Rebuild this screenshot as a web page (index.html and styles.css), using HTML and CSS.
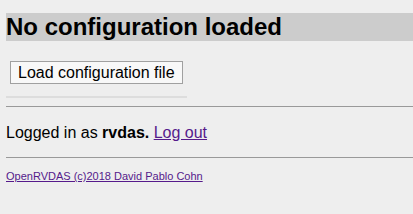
FILE: index.html
```html
<!DOCTYPE html>
<html lang="en">
<head>
    <meta charset="UTF-8" />
    <title>OpenRVDAS</title>
    <link rel="stylesheet" href="styles.css">
</head>
<body>
    <h1 class="status">No configuration loaded</h1>

    <div class="load-panel">
        <button class="load-button">Load configuration file</button>
    </div>

    <hr />

    <div class="login">
        Logged in as <b>rvdas.</b> <a href="#">Log out</a>
    </div>

    <hr />

    <div class="footer">
        <a href="#">OpenRVDAS (c)2018 David Pablo Cohn</a>
    </div>
</body>
</html>
```

FILE: styles.css
```css
body {
    font-family: "Liberation Sans", Arial, sans-serif;
    background: #eeeeee;
    color: #000;
    margin: 0 0 0 6px;
}

a {
    color: #551a8b;
}

h1.status {
    font-size: 24px;
    font-weight: bold;
    background: #cccccc;
    margin: 13px 0 0 0;
    line-height: 28px;
}

.load-panel {
    width: 181px;
    padding: 20px 0 12px 4px;
    box-sizing: border-box;
    border-bottom: 2px solid #dddddd;
}

.load-button {
    font-family: "Liberation Sans", Arial, sans-serif;
    font-size: 16px;
    height: 23px;
    padding: 0 7px;
    background: #f8f8f8;
    border: 1px solid #a0a0a0;
    border-radius: 0;
    color: #000;
}

hr {
    border: none;
    border-top: 1px solid #999999;
    margin: 8px 0 0 0;
}

.login {
    font-size: 16px;
    margin: 17px 0 15px 0;
}

.footer {
    font-size: 11px;
    margin-top: 12px;
}
```
